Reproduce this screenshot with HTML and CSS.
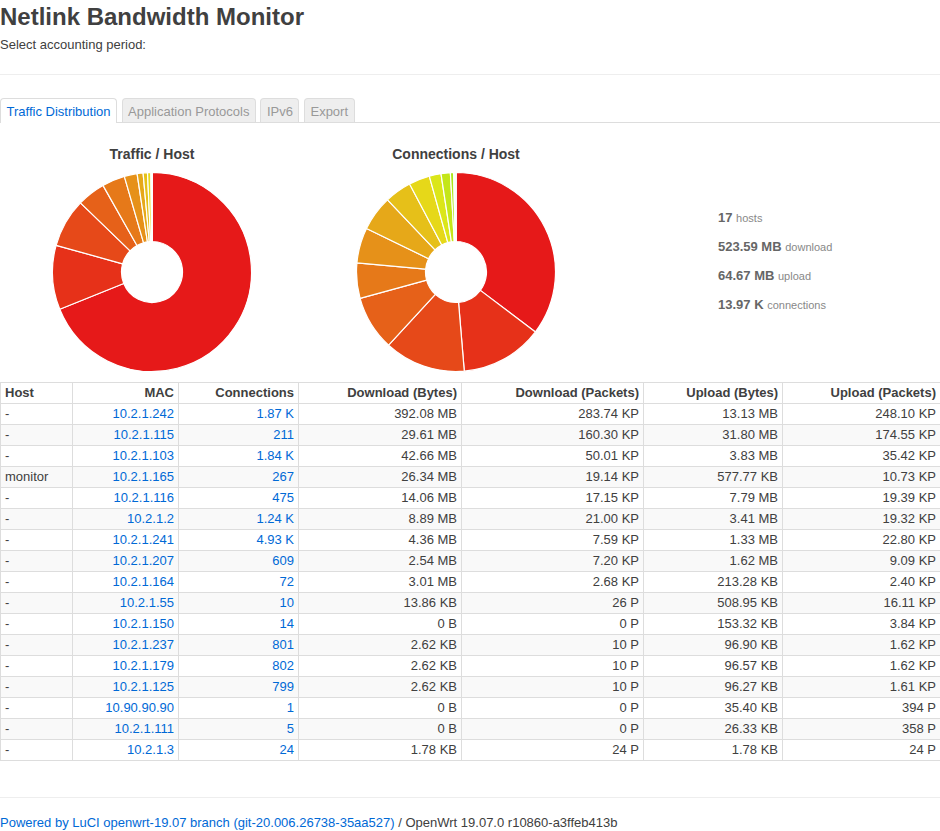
FILE: index.html
```html
<!DOCTYPE html>
<html>
<head>
<meta charset="utf-8">
<title>Netlink Bandwidth Monitor</title>
<link rel="stylesheet" href="styles.css">
</head>
<body>
<h2 class="title">Netlink Bandwidth Monitor</h2>
<div class="period">Select accounting period:</div>
<hr class="rule">
<ul class="tabs">
  <li class="tab active">Traffic Distribution</li>
  <li class="tab">Application Protocols</li>
  <li class="tab">IPv6</li>
  <li class="tab">Export</li>
</ul>
<div class="charts">
  <div class="chart">
    <div class="chart-title">Traffic / Host</div>
    <svg id="pie-traffic" class="pie" width="200" height="200" viewBox="0 0 200 200"></svg>
  </div>
  <div class="chart">
    <div class="chart-title">Connections / Host</div>
    <svg id="pie-conn" class="pie" width="200" height="200" viewBox="0 0 200 200"></svg>
  </div>
  <ul class="kpi">
    <li><b>17</b> <span>hosts</span></li>
    <li><b>523.59 MB</b> <span>download</span></li>
    <li><b>64.67 MB</b> <span>upload</span></li>
    <li><b>13.97 K</b> <span>connections</span></li>
  </ul>
</div>
<table class="hosts">
  <colgroup>
    <col class="c-host"><col class="c-mac"><col class="c-conn"><col class="c-dlb"><col class="c-dlp"><col class="c-ulb"><col class="c-ulp">
  </colgroup>
  <thead>
    <tr><th class="l">Host</th><th>MAC</th><th>Connections</th><th>Download (Bytes)</th><th>Download (Packets)</th><th>Upload (Bytes)</th><th>Upload (Packets)</th></tr>
  </thead>
  <tbody>
    <tr><td class="l">-</td><td><a href="#">10.2.1.242</a></td><td><a href="#">1.87 K</a></td><td>392.08 MB</td><td>283.74 KP</td><td>13.13 MB</td><td>248.10 KP</td></tr>
    <tr><td class="l">-</td><td><a href="#">10.2.1.115</a></td><td><a href="#">211</a></td><td>29.61 MB</td><td>160.30 KP</td><td>31.80 MB</td><td>174.55 KP</td></tr>
    <tr><td class="l">-</td><td><a href="#">10.2.1.103</a></td><td><a href="#">1.84 K</a></td><td>42.66 MB</td><td>50.01 KP</td><td>3.83 MB</td><td>35.42 KP</td></tr>
    <tr><td class="l">monitor</td><td><a href="#">10.2.1.165</a></td><td><a href="#">267</a></td><td>26.34 MB</td><td>19.14 KP</td><td>577.77 KB</td><td>10.73 KP</td></tr>
    <tr><td class="l">-</td><td><a href="#">10.2.1.116</a></td><td><a href="#">475</a></td><td>14.06 MB</td><td>17.15 KP</td><td>7.79 MB</td><td>19.39 KP</td></tr>
    <tr><td class="l">-</td><td><a href="#">10.2.1.2</a></td><td><a href="#">1.24 K</a></td><td>8.89 MB</td><td>21.00 KP</td><td>3.41 MB</td><td>19.32 KP</td></tr>
    <tr><td class="l">-</td><td><a href="#">10.2.1.241</a></td><td><a href="#">4.93 K</a></td><td>4.36 MB</td><td>7.59 KP</td><td>1.33 MB</td><td>22.80 KP</td></tr>
    <tr><td class="l">-</td><td><a href="#">10.2.1.207</a></td><td><a href="#">609</a></td><td>2.54 MB</td><td>7.20 KP</td><td>1.62 MB</td><td>9.09 KP</td></tr>
    <tr><td class="l">-</td><td><a href="#">10.2.1.164</a></td><td><a href="#">72</a></td><td>3.01 MB</td><td>2.68 KP</td><td>213.28 KB</td><td>2.40 KP</td></tr>
    <tr><td class="l">-</td><td><a href="#">10.2.1.55</a></td><td><a href="#">10</a></td><td>13.86 KB</td><td>26 P</td><td>508.95 KB</td><td>16.11 KP</td></tr>
    <tr><td class="l">-</td><td><a href="#">10.2.1.150</a></td><td><a href="#">14</a></td><td>0 B</td><td>0 P</td><td>153.32 KB</td><td>3.84 KP</td></tr>
    <tr><td class="l">-</td><td><a href="#">10.2.1.237</a></td><td><a href="#">801</a></td><td>2.62 KB</td><td>10 P</td><td>96.90 KB</td><td>1.62 KP</td></tr>
    <tr><td class="l">-</td><td><a href="#">10.2.1.179</a></td><td><a href="#">802</a></td><td>2.62 KB</td><td>10 P</td><td>96.57 KB</td><td>1.62 KP</td></tr>
    <tr><td class="l">-</td><td><a href="#">10.2.1.125</a></td><td><a href="#">799</a></td><td>2.62 KB</td><td>10 P</td><td>96.27 KB</td><td>1.61 KP</td></tr>
    <tr><td class="l">-</td><td><a href="#">10.90.90.90</a></td><td><a href="#">1</a></td><td>0 B</td><td>0 P</td><td>35.40 KB</td><td>394 P</td></tr>
    <tr><td class="l">-</td><td><a href="#">10.2.1.111</a></td><td><a href="#">5</a></td><td>0 B</td><td>0 P</td><td>26.33 KB</td><td>358 P</td></tr>
    <tr><td class="l">-</td><td><a href="#">10.2.1.3</a></td><td><a href="#">24</a></td><td>1.78 KB</td><td>24 P</td><td>1.78 KB</td><td>24 P</td></tr>
  </tbody>
</table>
<footer class="footer">
  <a href="#">Powered by LuCI openwrt-19.07 branch (git-20.006.26738-35aa527)</a> / OpenWrt 19.07.0 r10860-a3ffeb413b
</footer>
<script src="app.js"></script>
</body>
</html>
```

FILE: styles.css
```css
* { box-sizing: border-box; }

body {
  margin: 0;
  background: #fff;
  color: #404040;
  font-family: "Liberation Sans", Arial, sans-serif;
  font-size: 13px;
  line-height: 18px;
}

a { color: #0069d6; text-decoration: none; }

.title {
  margin: 4px 0 0;
  font-size: 24px;
  line-height: 26px;
  font-weight: bold;
  color: #404040;
}

.period {
  margin-top: 6px;
  line-height: 18px;
}

.rule {
  margin: 20px 0 0;
  border: 0;
  border-top: 1px solid #eee;
  height: 0;
}

.tabs {
  list-style: none;
  margin: 23px 0 0;
  padding: 0;
  display: flex;
  gap: 4.5px;
  border-bottom: 1px solid #ddd;
}

.tab {
  padding: 5px 5.5px 2px;
  line-height: 16px;
  border: 1px solid #ddd;
  border-bottom: 0;
  border-radius: 4px 4px 0 0;
  background: #eee;
  color: #999;
}

.tab.active {
  background: #fff;
  color: #0069d6;
  margin-bottom: -1px;
  padding-bottom: 3px;
}

.charts {
  display: flex;
  margin-top: 22px;
}

.chart {
  width: 304px;
  display: flex;
  flex-direction: column;
  align-items: center;
}

.chart-title {
  font-size: 14px;
  font-weight: bold;
  line-height: 18px;
  color: #404040;
}

.pie {
  display: block;
  margin-top: 9px;
}

.pie path {
  stroke: #fff;
  stroke-width: 1.2;
  stroke-linejoin: round;
}

.kpi {
  list-style: none;
  margin: 0;
  padding: 58px 0 0 110px;
  color: #888;
}

.kpi li {
  display: block;
  height: 29px;
  line-height: 29px;
  white-space: nowrap;
}

.kpi b {
  color: #666;
  font-size: 13px;
  line-height: 1;
}

.kpi span {
  font-size: 11px;
  line-height: 1;
}

.hosts {
  margin-top: 10px;
  width: 940px;
  table-layout: fixed;
  border-collapse: collapse;
}

.c-host { width: 72px; }
.c-mac { width: 106px; }
.c-conn { width: 120px; }
.c-dlb { width: 163px; }
.c-dlp { width: 182px; }
.c-ulb { width: 139px; }
.c-ulp { width: 158px; }

.hosts th,
.hosts td {
  border: 1px solid #ddd;
  padding: 2px 4px;
  line-height: 16px;
  text-align: right;
  white-space: nowrap;
  overflow: hidden;
}

.hosts th { font-weight: bold; color: #404040; }

.hosts .l { text-align: left; color: #404040; }

.hosts tbody tr:nth-child(even) td { background: #f9f9f9; }

.footer {
  margin-top: 36px;
  border-top: 1px solid #eee;
  padding-top: 16px;
  line-height: 18px;
}
```

FILE: app.js
```js
(function () {
  var NS = "http://www.w3.org/2000/svg";

  function donut(id, values) {
    var svg = document.getElementById(id);
    var cx = 100, cy = 100, R = 99.5, r = 30.5;
    var total = values.reduce(function (a, b) { return a + b; }, 0);
    var n = values.length;
    var a0 = -Math.PI / 2;
    values.forEach(function (v, i) {
      var a1 = a0 + (v / total) * Math.PI * 2;
      var large = (a1 - a0) > Math.PI ? 1 : 0;
      var d = "M" + (cx + R * Math.cos(a0)).toFixed(3) + " " + (cy + R * Math.sin(a0)).toFixed(3) +
        " A" + R + " " + R + " 0 " + large + " 1 " + (cx + R * Math.cos(a1)).toFixed(3) + " " + (cy + R * Math.sin(a1)).toFixed(3) +
        " L" + (cx + r * Math.cos(a1)).toFixed(3) + " " + (cy + r * Math.sin(a1)).toFixed(3) +
        " A" + r + " " + r + " 0 " + large + " 0 " + (cx + r * Math.cos(a0)).toFixed(3) + " " + (cy + r * Math.sin(a0)).toFixed(3) + " Z";
      var p = document.createElementNS(NS, "path");
      p.setAttribute("d", d);
      p.setAttribute("fill", "hsl(" + Math.floor((120 / n) * i) + ", 80%, 50%)");
      svg.appendChild(p);
      a0 = a1;
    });
  }

  donut("pie-traffic", [405.21, 61.41, 46.49, 26.918, 21.85, 12.30, 5.69, 4.16, 3.223, 0.511, 0.1497, 0.0972, 0.0969, 0.0966, 0.0346, 0.0257, 0.0035]);
  donut("pie-conn", [4930, 1870, 1840, 1240, 802, 801, 799, 609, 475, 267, 211, 72, 24, 14, 10, 5, 1]);
})();
```
